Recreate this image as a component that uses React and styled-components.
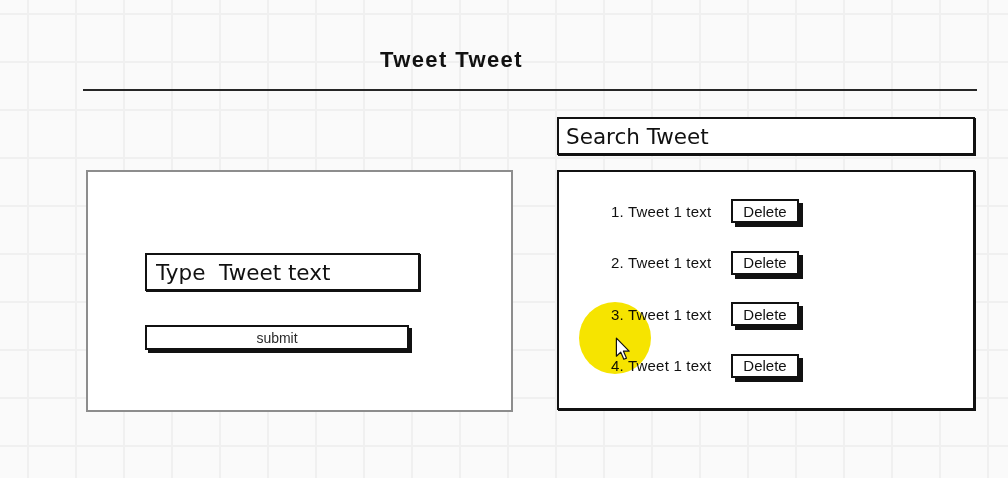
import React from 'react';
import styled, { createGlobalStyle } from 'styled-components';

const Global = createGlobalStyle`
  * { box-sizing: border-box; }
  html, body { margin: 0; padding: 0; background: #fafafa; }
  body { font-family: "Liberation Sans", Arial, sans-serif; color: #1a1a1a; }
`;

const St = {
  Page: styled.div`
    position: relative;
    width: 1008px;
    height: 478px;
    overflow: hidden;
    background-color: #fafafa;
    background-image:
      linear-gradient(to right, #f0f0f0 2px, transparent 2px),
      linear-gradient(to bottom, #f0f0f0 2px, transparent 2px);
    background-size: 48px 48px;
    background-position: 27px 13px;
  `,
  Header: styled.header`
    margin-left: 83px;
    width: 894px;
    padding-top: 47px;
  `,
  Title: styled.h1`
    margin: 0;
    padding-left: 297px;
    font-family: "Liberation Sans", Arial, sans-serif;
    font-size: 22px;
    line-height: 26px;
    font-weight: bold;
    letter-spacing: 1.4px;
    color: #111;
  `,
  Rule: styled.div`
    margin-top: 16px;
    height: 2px;
    background: #262626;
  `,
  Main: styled.main`
    margin: 26px 0 0 86px;
    display: grid;
    grid-template-columns: 427px 418px;
    grid-template-rows: 38px auto;
    grid-template-areas:
      ". search"
      "compose list";
    column-gap: 44px;
    row-gap: 15px;
  `,
  Compose: styled.section`
    grid-area: compose;
    height: 242px;
    background: #fff;
    border: 2px solid #8d8d8d;
    padding: 81px 0 0 57px;
    display: flex;
    flex-direction: column;
    align-items: flex-start;
    gap: 34px;
  `,
  Field: styled.input`
    grid-area: ${p => p.$area || 'auto'};
    width: ${p => p.$width}px;
    height: 38px;
    padding: 0 ${p => p.$pad}px;
    background: #fff;
    border: 2px solid #111;
    box-shadow: 1px 1px 0 #111;
    outline: none;
    font-family: "DejaVu Sans", Verdana, sans-serif;
    font-size: 21.5px;
    color: #111;
    &::placeholder { color: #111; opacity: 1; }
  `,
  Submit: styled.button`
    width: 264px;
    height: 25px;
    padding: 0;
    background: #fff;
    border: 2px solid #111;
    box-shadow: 3px 3px 0 #111;
    font-family: "Liberation Sans", Arial, sans-serif;
    font-size: 14px;
    color: #2a2a2a;
    cursor: pointer;
  `,
  List: styled.ol`
    grid-area: list;
    margin: 0;
    height: 240px;
    background: #fff;
    border: 2px solid #111;
    box-shadow: 1px 1px 0 #111;
    padding: 27px 0 0 52px;
    list-style: none;
    display: flex;
    flex-direction: column;
    gap: 27.6px;
  `,
  Row: styled.li`
    height: 24px;
    display: grid;
    grid-template-columns: 120px auto;
    align-items: center;
  `,
  ItemText: styled.span`
    font-size: 15px;
    letter-spacing: 0.2px;
    color: #111;
  `,
  Delete: styled.button`
    width: 68px;
    height: 24px;
    padding: 0;
    background: #fff;
    border: 2px solid #111;
    box-shadow: 4px 4px 0 #111;
    font-family: "Liberation Sans", Arial, sans-serif;
    font-size: 15px;
    color: #111;
    cursor: pointer;
  `,
  // screen-recorder cursor highlight, sits over the list
  Highlight: styled.div`
    position: absolute;
    left: 579px;
    top: 302px;
    width: 72px;
    height: 72px;
    border-radius: 50%;
    background: #f6e400;
    mix-blend-mode: multiply;
    pointer-events: none;
  `,
  Cursor: styled.svg`
    position: absolute;
    left: 615px;
    top: 337px;
    pointer-events: none;
  `,
};

const tweets = [1, 2, 3, 4];

export default function App() {
  return (
    <St.Page>
      <Global />
      <St.Header>
        <St.Title>Tweet Tweet</St.Title>
        <St.Rule />
      </St.Header>
      <St.Main>
        <St.Field $area="search" $width={418} $pad={7} placeholder="Search Tweet" />
        <St.Compose>
          <St.Field $width={275} $pad={9} placeholder="Type  Tweet text" />
          <St.Submit type="button">submit</St.Submit>
        </St.Compose>
        <St.List>
          {tweets.map(n => (
            <St.Row key={n}>
              <St.ItemText>{n}. Tweet 1 text</St.ItemText>
              <St.Delete type="button">Delete</St.Delete>
            </St.Row>
          ))}
        </St.List>
      </St.Main>
      <St.Highlight />
      <St.Cursor width="16" height="24" viewBox="0 0 13 20">
        <path d="M1 1 L1 16 L4.6 12.6 L7.2 18.6 L9.4 17.6 L6.9 11.8 L11.6 11.8 Z"
          fill="#fff" stroke="#111" strokeWidth="1" strokeLinejoin="round" />
      </St.Cursor>
    </St.Page>
  );
}
